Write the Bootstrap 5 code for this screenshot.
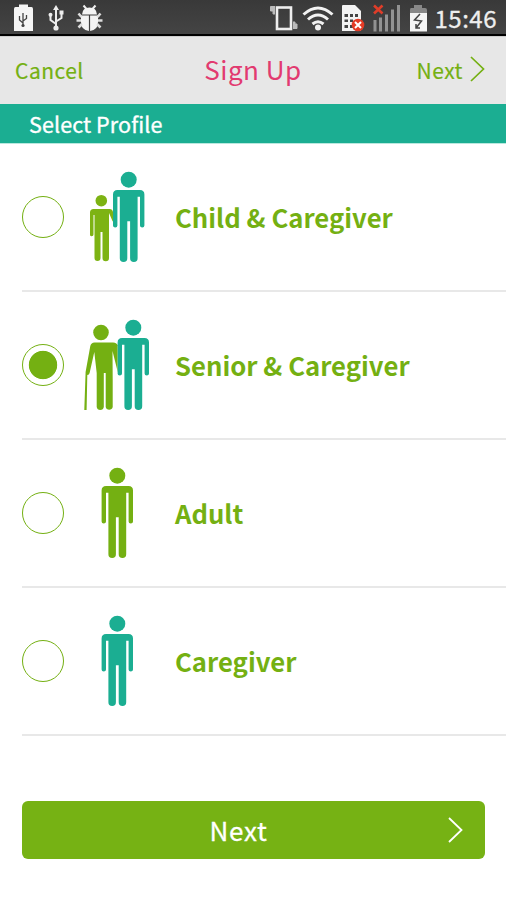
<!DOCTYPE html>
<html lang="en">
<head>
<meta charset="utf-8">
<meta name="viewport" content="width=device-width, initial-scale=1">
<title>Sign Up</title>
<link href="https://cdn.jsdelivr.net/npm/bootstrap@5.3.0/dist/css/bootstrap.min.css" rel="stylesheet">
<style>
:root { --leaf: #74b012; --teal: #1bae92; --pink: #e23a70; }
body { font-family: "Noto Sans CJK KR", "Noto Sans", sans-serif; min-height: 900px; overflow: hidden; }
svg { display: block; flex: none; }
.status-bar { height: 36px; background: linear-gradient(#393939, #444 94%, #000 95%); padding: 0 9px 0 12px; }
.clock { font-size: 24px; line-height: 35px; letter-spacing: .5px; color: #eee; margin-left: 6px; -webkit-text-stroke: .3px #eee; }
.title-bar { height: 68px; background: #e7e7e7; border-top: 1px solid #cfcfcf; padding: 0 21px 0 15px; }
.title-bar a { color: var(--leaf); font-size: 21px; line-height: 64px; letter-spacing: .5px; -webkit-text-stroke: .2px; }
.title-bar a span, .title-bar .cancel { display: block; padding-bottom: 2px; }
.title-bar .side { flex: 1 1 0; }
.title-bar h1 { color: var(--pink); font-size: 26px; line-height: 64px; letter-spacing: .5px; padding: 0 0 3px 6px; }
.title-bar svg { margin: 0 0 4px 7px; }
.section-head { height: 40px; line-height: 39px; background: var(--teal); border-bottom: 1px solid #b9e8de; font-size: 21.5px; letter-spacing: .1px; padding-left: 29px; -webkit-text-stroke: .35px; }
.profile-list { padding-left: 22px; }
.profile { height: 148px; border-bottom: 2px solid #e8e8e8; cursor: pointer; }
.profile .form-check-input { width: 42px; height: 42px; border: 1.7px solid var(--leaf); box-shadow: none; background-color: #fff; }
.profile .form-check-input:checked { background: radial-gradient(circle, var(--leaf) 13.8px, #fff 14.6px); }
.figures { margin-left: 11px; margin-right: 10px; }
.profile-name { color: var(--leaf); font-size: 25.7px; font-weight: 700; line-height: 40px; padding-bottom: 1px; }
.next-btn { margin: 65px 21px 0 22px; height: 58px; background: #76b214; border-radius: 6px; padding: 0 22px 0 7px; font-size: 26px; letter-spacing: .7px; -webkit-text-stroke: .3px; }
.next-btn span { padding-bottom: 2px; }
.next-btn:hover { background: #6aa212; }
</style>
</head>
<body class="bg-white">
<svg width="0" height="0" class="position-absolute" aria-hidden="true">
  <symbol id="adult" viewBox="-16 0 32 90" overflow="visible">
    <circle cx="0" cy="8" r="8"/>
    <path d="M-11.2 18.3H11.2Q15.7 18.3 15.7 22.8V53.7Q15.7 55.8 13.5 55.8T11.3 53.7V25H8.900V86.5A3.6 3.6 0 0 1 1.4 86.5V49.5H-1.4V86.5A3.6 3.6 0 0 1-8.900 86.5V25H-11.3V53.7Q-11.3 55.8-13.5 55.8T-15.7 53.7V22.8Q-15.7 18.3-11.2 18.3Z"/>
  </symbol>
</svg>

<header class="status-bar d-flex justify-content-between">
  <div class="d-flex" aria-hidden="true">
    <svg width="96" height="34" viewBox="12 0 96 34">
      <path d="M15.5 7H19V4.5H28V7H31.5Q33 7 33 9V31H14V9Q14 7 15.5 7Z" fill="#f5f5f5"/>
      <g fill="none" stroke="#444" stroke-width="1.3"><path d="M23 26V13M23 23L19.5 20V16M23 21L26.5 18.5V15"/></g>
      <circle cx="23" cy="25.5" r="1.6" fill="#444"/>
      <g fill="none" stroke="#eee" stroke-width="2"><path d="M56 28V8M56 24L50.5 20V15M56 21.5L61.5 18V13"/></g>
      <path d="M56 5L59 10H53Z" fill="#eee"/><circle cx="56" cy="28" r="2.6" fill="#eee"/><circle cx="50.5" cy="14.7" r="2" fill="#eee"/><path d="M59.5 10.5h4v4h-4z" fill="#eee"/>
      <path d="M83.500 5.500L86.500 9M95.500 5.500L92.500 9" stroke="#eee" stroke-width="2"/>
      <path d="M82 14.500Q82.500 7.500 89.500 7.500T97 14.500ZM81 15.500H88.900V31Q81 30 81 22ZM90.100 15.500H98V22Q98 30 90.100 31Z" fill="#f3f3f3"/>
      <path d="M81.500 17L78.500 13.500M97.500 17L100.500 13.500M81 20.500H76.500M98 20.500H102.500M82 24L78.500 27.500M97 24L100.500 27.500" fill="none" stroke="#ddd" stroke-width="2.600"/>
    </svg>
  </div>
  <div class="d-flex">
    <svg width="162" height="34" viewBox="267 0 162 34" aria-hidden="true">
      <rect x="277" y="7.500" width="14" height="21.500" fill="none" stroke="#eee" stroke-width="2.600"/>
      <path d="M275 6.500H270.500V11H273V14H275M293 22H295V24H297V28.500H293" fill="#bbb" stroke="#bbb"/>
      <g fill="none" stroke="#f2f2f2" stroke-width="3"><path d="M303.500 14.500Q318 1.500 332.500 14.500M308 19.500Q318 10.500 328 19.500M312.500 24Q318 19.500 323.500 24"/></g><circle cx="318" cy="27.500" r="3" fill="#f2f2f2"/>
      <path d="M342 6Q342 5 343 5H355L361 11V31H342Z" fill="#f3f3f3"/>
      <path d="M344.500 14H348V17H344.500ZM350 14H353V17H350ZM355 14H358V17H355ZM344.500 19.500H348V22H344.500ZM350 19.500H353V22H350ZM344.500 25H348V28H344.500ZM350 25H353V28H350Z" fill="#444"/>
      <circle cx="358" cy="25" r="6.300" fill="#e43b25"/><path d="M355 22L361 28M361 22L355 28" stroke="#fff" stroke-width="2"/>
      <g fill="#929292"><path d="M373.500 20H376.500V31.500H373.500ZM379 17.500H382V31.500H379ZM385 14.500H388V31.500H385ZM391 9.500H394V31.500H391ZM397 5H400V31.500H397Z"/></g>
      <path d="M374 5.500L382.500 13.500M382.500 5.500L374 13.500" stroke="#df3d29" stroke-width="2.600"/>
      <path d="M411 8H414V5H422V8H425Q427 8 427 10V13H410V10Q410 8 411 8Z" fill="#888"/><path d="M410 13H427V31.500H410Z" fill="#f5f5f5"/>
      <path d="M420 14L414.500 20L421.500 21L416 28M416 24V28H420" fill="none" stroke="#444" stroke-width="1.500"/>
    </svg>
    <span class="clock">15:46</span>
  </div>
</header>

<nav class="title-bar d-flex align-items-center">
  <div class="side"><a href="#" class="cancel text-decoration-none">Cancel</a></div>
  <h1 class="m-0 fw-normal">Sign Up</h1>
  <div class="side d-flex justify-content-end">
    <a href="#" class="d-flex align-items-center text-decoration-none"><span>Next</span>
      <svg width="15" height="26" viewBox="0 0 15 26" fill="none" stroke="currentColor" stroke-width="1.700"><path d="M1 1L13.500 13L1 25"/></svg></a>
  </div>
</nav>

<div class="section-head text-white">Select Profile</div>

<main>
  <div class="profile-list">
    <label class="profile d-flex align-items-center">
      <input class="form-check-input m-0 flex-shrink-0" type="radio" name="profile">
      <svg class="figures" width="90" height="100" viewBox="0 0 90 100">
        <g fill="#7db313"><circle cx="26.300" cy="33.700" r="5.800"/>
        <path d="M18.500 42H34.500Q37.500 42 38 45L40 57L37.500 54L34 46V91A2.800 2.800 0 0 1 27.500 91V65H25.500V91A2.800 2.800 0 0 1 19.500 91V48H18.500V67.500Q18.500 69.300 16.700 69.300T15 67.500V45.500Q15 42 18.500 42Z"/></g>
        <use href="#adult" x="37.700" y="4.700" width="32" height="90" fill="#1bae92"/>
      </svg>
      <span class="profile-name">Child &amp; Caregiver</span>
    </label>
    <label class="profile d-flex align-items-center">
      <input class="form-check-input m-0 flex-shrink-0" type="radio" name="profile" checked>
      <svg class="figures" width="90" height="100" viewBox="0 0 90 100">
        <g fill="#74b012"><circle cx="26" cy="17.500" r="7.800"/>
        <path d="M19.500 27.500H38Q42 27.500 43 31V58L37.500 36L37.700 64V92A3.600 3.600 0 0 1 30.700 92V58H28.800V92A3.600 3.600 0 0 1 21.700 92V58L19.300 37L14.600 58Q14.200 59.800 12.300 60L11.600 95H9.300L10.600 57L15.300 31Q16.200 27.500 19.500 27.500Z"/></g>
        <use href="#adult" x="42.300" y="4.700" width="32" height="90" fill="#1bae92"/>
        <path d="M42.300 31V58" stroke="#fff" stroke-width=".5" opacity=".6"/>
      </svg>
      <span class="profile-name">Senior &amp; Caregiver</span>
    </label>
    <label class="profile d-flex align-items-center">
      <input class="form-check-input m-0 flex-shrink-0" type="radio" name="profile">
      <svg class="figures" width="90" height="100" viewBox="0 0 90 100"><use href="#adult" x="26.300" y="4.700" width="32" height="90" fill="#74b012"/></svg>
      <span class="profile-name">Adult</span>
    </label>
    <label class="profile d-flex align-items-center">
      <input class="form-check-input m-0 flex-shrink-0" type="radio" name="profile">
      <svg class="figures" width="90" height="100" viewBox="0 0 90 100"><use href="#adult" x="26.300" y="4.700" width="32" height="90" fill="#1bae92"/></svg>
      <span class="profile-name">Caregiver</span>
    </label>
  </div>
  <a href="#" class="next-btn d-flex align-items-center text-white text-decoration-none">
    <span class="flex-grow-1 text-center">Next</span>
    <svg width="15" height="26" viewBox="0 0 15 26" fill="none" stroke="#fff" stroke-width="1.800"><path d="M1 1L13.500 13L1 25"/></svg>
  </a>
</main>
<script src="https://cdn.jsdelivr.net/npm/bootstrap@5.3.0/dist/js/bootstrap.bundle.min.js"></script>
</body>
</html>
